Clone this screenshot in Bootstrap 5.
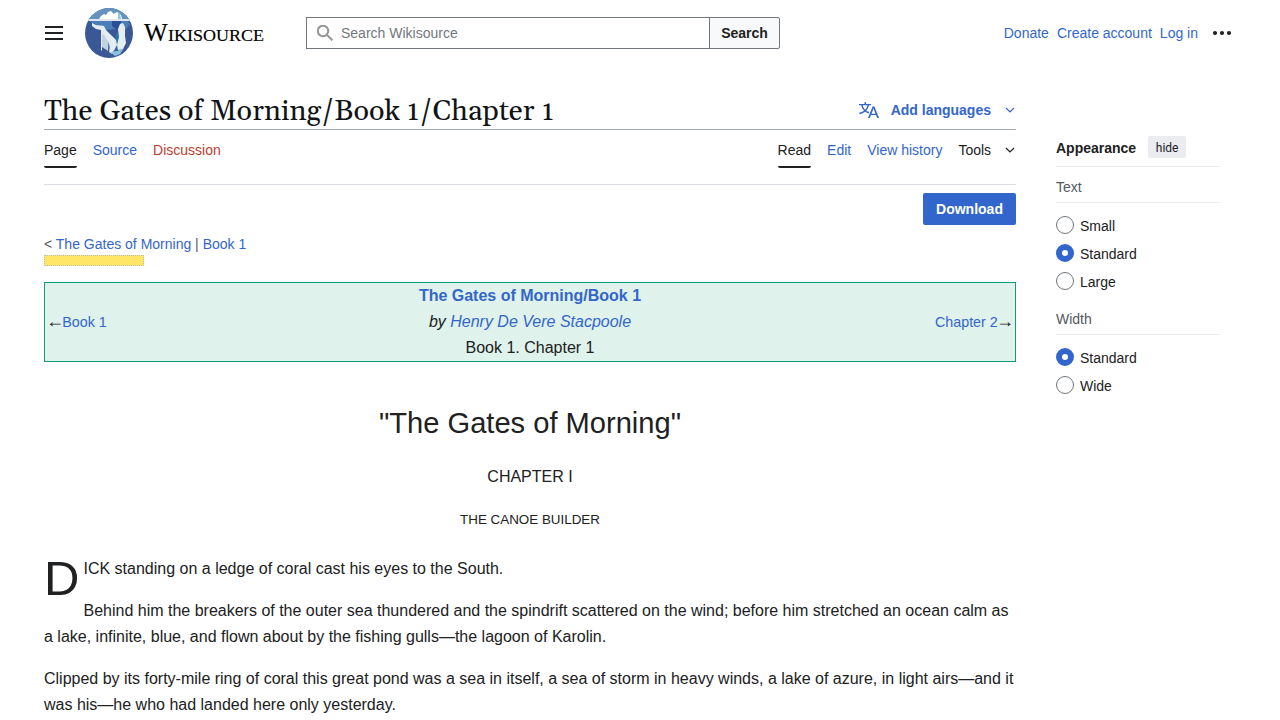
<!DOCTYPE html>
<html lang="en">
<head>
<meta charset="utf-8">
<title>The Gates of Morning/Book 1/Chapter 1</title>
<meta name="viewport" content="width=device-width, initial-scale=1">
<link href="https://cdn.jsdelivr.net/npm/bootstrap@5.3.0/dist/css/bootstrap.min.css" rel="stylesheet">
<style>
body{font:14px/22px "Liberation Sans",sans-serif;color:#202122;background:#fff;overflow:hidden;height:720px}
a{color:#36c;text-decoration:none}
.page{width:1280px;padding:0 48px 0 44px}
.top-bar{height:66px}
.brand{margin-left:21px;width:180px}
.brand-word{margin-left:10px}
.search{width:474px;margin-left:42px}
.search .form-control{height:32px;padding:4px 8px 4px 34px;border:1px solid #72777d;border-radius:2px 0 0 2px;font-size:14px;color:#202122}
.search .form-control::placeholder{color:#72777d;opacity:1}
.search .btn{width:71px;height:32px;padding:0;border:1px solid #72777d;border-radius:0 2px 2px 0;background:#f8f9fa;font-size:14px;font-weight:700;color:#202122}
.search .form-control{flex:0 0 404px}
.search .btn{flex:0 0 71px}
.search-glass{left:10px;top:8px;z-index:6}
.user-links{gap:8px}
.content-col{width:972px}
.title-bar{height:64px;border-bottom:1px solid #a2a9b1;padding-top:24px}
.title-bar h1{font:400 28.8px/44px Georgia,Gelasio,"Liberation Serif",serif;color:#101418}
.lang-btn{height:40px;font-weight:700;margin-right:1px}
.tabs{height:55px;border-bottom:1px solid #dadde3;gap:16px}
.tabs a,.tabs span{display:block;height:38px;padding-top:9px;white-space:nowrap}
.tabs span{margin-right:1px}
.tabs .current{color:#202122;border-bottom:2px solid #202122;border-radius:0 0 2px 2px}
.tabs .redlink{color:#bf3c2c}
.download{width:93px;height:32px;border-radius:2px;border:0;background:#36c;color:#fff;font-size:14px;font-weight:700;padding:0}
.crumbs{font-size:14px;line-height:20px;color:#54595d;margin-top:9px}
.progress-mark{width:100px;height:11px;margin-top:1px;background:#ffe666;border:1px dotted #bbb}
.book-nav{height:80px;margin-top:16px;border:1px solid #119b79;background:#dff2eb;padding:0 3px}
.book-nav .mid{font-size:16px;line-height:26px}
.side-cell{width:150px;font-size:14.3px;line-height:20px;padding-bottom:1px}
.arrow{font-family:"Liberation Serif",serif;font-size:18px;line-height:1;margin:0 -1.9px}
.prose{font-size:16px;line-height:26px;padding-top:38px}
.prose p{margin:0 0 16px}
.prose .work-title{font-size:29.1px;line-height:46px;margin-bottom:18px}
.prose .section-name{font-size:13.4px;padding-top:1px;margin-bottom:23px}
.drop-letter{float:left;font-size:49px;line-height:50px;width:39.5px;height:50px;margin-top:-3px}
.side-col{width:164px;margin-left:40px;padding-top:70px}
.side-head{height:31px;border-bottom:1px solid #eaecf0;padding-bottom:7px}
.hide-btn{height:22px;width:38px;border:0;border-radius:2px;background:#eaecf0;font:12px/22px Roboto,sans-serif;color:#202122;padding:1px 0 0;margin:-2px 0 0 12px}
.group-name{height:36px;border-bottom:1px solid #eaecf0;color:#54595d;padding-top:9px}
.choices{padding-top:8px}
.choices + .group-name{margin-top:4px}
.choices label{height:28px;gap:6px}
.choices label span{padding-top:2px}
.choices .form-check-input{width:18px;height:18px;margin:0;border:1px solid #72777d;background-image:none}
.choices .form-check-input:checked{border:6px solid #36c;background:#fff}
</style>
</head>
<body>
<div class="page">
<header class="top-bar d-flex align-items-center">
  <svg width="20" height="20" viewBox="0 0 20 20" fill="#202122"><path d="M1 3h18v2H1zM1 9h18v2H1zM1 15h18v2H1z"/></svg>
  <a href="#" class="brand d-flex align-items-center">
    <svg width="48" height="50" viewBox="0 0 48 50">
      <defs><clipPath id="disc"><ellipse cx="24" cy="25" rx="24" ry="25"/></clipPath></defs>
      <g clip-path="url(#disc)">
        <path fill="#3a5896" d="M0 0h48v50H0z"/><path fill="#6693bd" d="M0 0h48v12H0z"/>
        <path fill="#4b7eb8" d="M5 13h38l2 3-4 5-3 2-8-2-9 1-6-4-8-3z"/>
        <path fill="#2b4c96" d="M27 13h9l-1 7-3 2-5-4z"/>
        <path fill="#fff" d="M14 11l2-3 3-2 2 1 2-3 3-1 2 2 1 3v3z"/><path fill="#fff" d="M28 6l4-2 4 3 1 4h-9z"/>
        <path fill="#8fc5eb" d="M33 4l2 2 1 5h-3z"/>
        <path fill="#dde6eb" d="M0 11h48v2H0z"/>
        <path fill="#c2d3df" d="M17 21l4 2 3 5-1 15-6-4z"/>
        <path fill="#7da9d2" d="M23 25l6 5 3 4-2 8-4 3-2-8z"/>
        <path fill="#2673ac" d="M31 25h4v15l-3 2-2-4z"/>
        <path fill="#e6edf0" d="M7 15l4 2 8 1 2 4 6 6 4 4 1 5-3 5-2 4-3-2 1-6-2-5-4-6-2-1v17l-1-1V22l-5-1-4-3z"/>
        <path fill="#e6edf0" d="M35 16l3-1 2 4v9l1 7-3 6-5 1-1-5 2-8-1-8z"/>
        <path fill="#8cc2df" d="M25 44l7-1 7-3-4 6-5 2z"/>
      </g>
    </svg>
    <svg class="brand-word" width="122" height="28" viewBox="0 0 122 28"><text x="1" y="22" fill="#000" font-family="Liberation Serif,serif" font-size="25" stroke="#000" stroke-width=".2">W</text><text x="25" y="22" fill="#000" font-family="Liberation Serif,serif" font-size="17" stroke="#000" stroke-width=".15" textLength="96" lengthAdjust="spacingAndGlyphs">IKISOURCE</text></svg>
  </a>
  <form class="search input-group flex-nowrap">
    <svg class="search-glass position-absolute" width="16" height="16" viewBox="0 0 16 16" fill="none" stroke="#929496" stroke-width="2"><circle cx="6" cy="6" r="5.2"/><path d="M9.9 9.9l5.4 5.4"/></svg>
    <input class="form-control" placeholder="Search Wikisource"><button type="button" class="btn">Search</button>
  </form>
  <nav class="user-links d-flex align-items-center ms-auto"><a href="#">Donate</a><a href="#">Create account</a><a href="#">Log in</a>
    <svg class="ms-1" width="22" height="20" viewBox="0 0 22 20" fill="#202122"><circle cx="5" cy="10" r="2.1"/><circle cx="12" cy="10" r="2.1"/><circle cx="19" cy="10" r="2.1"/></svg></nav>
</header>
<div class="d-flex">
<main class="content-col">
  <div class="title-bar d-flex justify-content-between">
    <h1 class="m-0">The Gates of Morning/Book 1/Chapter 1</h1>
    <a href="#" class="lang-btn d-flex align-items-center">
      <svg width="20" height="20" viewBox="0 0 20 20" fill="#36c"><path d="M20 18h-1.44a.61.61 0 0 1-.4-.12.81.81 0 0 1-.23-.31L17 15h-5l-1 2.54a.77.77 0 0 1-.22.3.59.59 0 0 1-.4.14H9l4.55-11.47h1.89zm-3.53-4.31L14.89 9.5a11.62 11.62 0 0 1-.39-1.24q-.09.37-.19.69l-.19.56-1.58 4.19zm-6.3-1.58a13.43 13.43 0 0 1-2.91-1.41 11.46 11.46 0 0 0 2.81-5.37H12V4H7.31a4 4 0 0 0-.2-.56C6.87 2.79 6.6 2 6.6 2l-1.47.5s.4.89.6 1.5H0v1.33h2.15A11.23 11.23 0 0 0 5 10.7a17.19 17.19 0 0 1-5 2.1q.56.82.87 1.38a23.28 23.28 0 0 0 5.22-2.51 15.64 15.64 0 0 0 3.56 1.77zM3.63 5.33h4.91a8.11 8.11 0 0 1-2.45 4.45 9.11 9.11 0 0 1-2.46-4.45z"/></svg>
      <span style="margin-left:12px">Add languages</span>
      <svg style="margin-left:14px" width="10" height="10" viewBox="0 0 10 10" fill="none" stroke="#36c" stroke-width="1.2"><path d="M1 3l4 4 4-4"/></svg>
    </a>
  </div>
  <nav class="tabs d-flex"><a href="#" class="current">Page</a><a href="#">Source</a><a href="#" class="redlink">Discussion</a>
    <a href="#" class="current ms-auto">Read</a><a href="#">Edit</a><a href="#">View history</a><span>Tools <svg style="margin-left:10px" width="10" height="10" viewBox="0 0 10 10" fill="none" stroke="#202122" stroke-width="1.2"><path d="M1 2l4 4 4-4"/></svg></span></nav>
  <div class="d-flex justify-content-end pt-2"><button class="download btn">Download</button></div>
  <div class="crumbs">&lt; <a href="#">The Gates of Morning</a> | <a href="#">Book 1</a></div>
  <div class="progress-mark"></div>
  <section class="book-nav d-flex align-items-center justify-content-between">
    <div class="side-cell"><span class="arrow">←</span><a href="#">Book 1</a></div>
    <div class="mid text-center"><b><a href="#">The Gates of Morning/Book 1</a></b><br><i>by <a href="#">Henry De Vere Stacpoole</a></i><br>Book 1. Chapter 1</div>
    <div class="side-cell text-end"><a href="#">Chapter 2</a><span class="arrow">→</span></div>
  </section>
  <article class="prose">
    <p class="work-title text-center">"The Gates of Morning"</p>
    <p class="text-center">CHAPTER I</p>
    <p class="section-name text-center">THE CANOE BUILDER</p>
    <div class="drop-letter">D</div>
    <p>ICK standing on a ledge of coral cast his eyes to the South.</p>
    <p>Behind him the breakers of the outer sea thundered and the spindrift scattered on the wind; before him stretched an ocean calm as a lake, infinite, blue, and flown about by the fishing gulls—the lagoon of Karolin.</p>
    <p>Clipped by its forty-mile ring of coral this great pond was a sea in itself, a sea of storm in heavy winds, a lake of azure, in light airs—and it was his—he who had landed here only yesterday.</p>
  </article>
</main>
<aside class="side-col">
  <div class="side-head d-flex align-items-center"><b>Appearance</b><button class="hide-btn">hide</button></div>
  <div class="group-name">Text</div>
  <div class="choices">
    <label class="d-flex align-items-center"><input class="form-check-input" type="radio" name="size"><span>Small</span></label>
    <label class="d-flex align-items-center"><input class="form-check-input" type="radio" name="size" checked><span>Standard</span></label>
    <label class="d-flex align-items-center"><input class="form-check-input" type="radio" name="size"><span>Large</span></label>
  </div>
  <div class="group-name">Width</div>
  <div class="choices">
    <label class="d-flex align-items-center"><input class="form-check-input" type="radio" name="width" checked><span>Standard</span></label>
    <label class="d-flex align-items-center"><input class="form-check-input" type="radio" name="width"><span>Wide</span></label>
  </div>
</aside>
</div>
</div>
<script src="https://cdn.jsdelivr.net/npm/bootstrap@5.3.0/dist/js/bootstrap.bundle.min.js"></script>
</body>
</html>
